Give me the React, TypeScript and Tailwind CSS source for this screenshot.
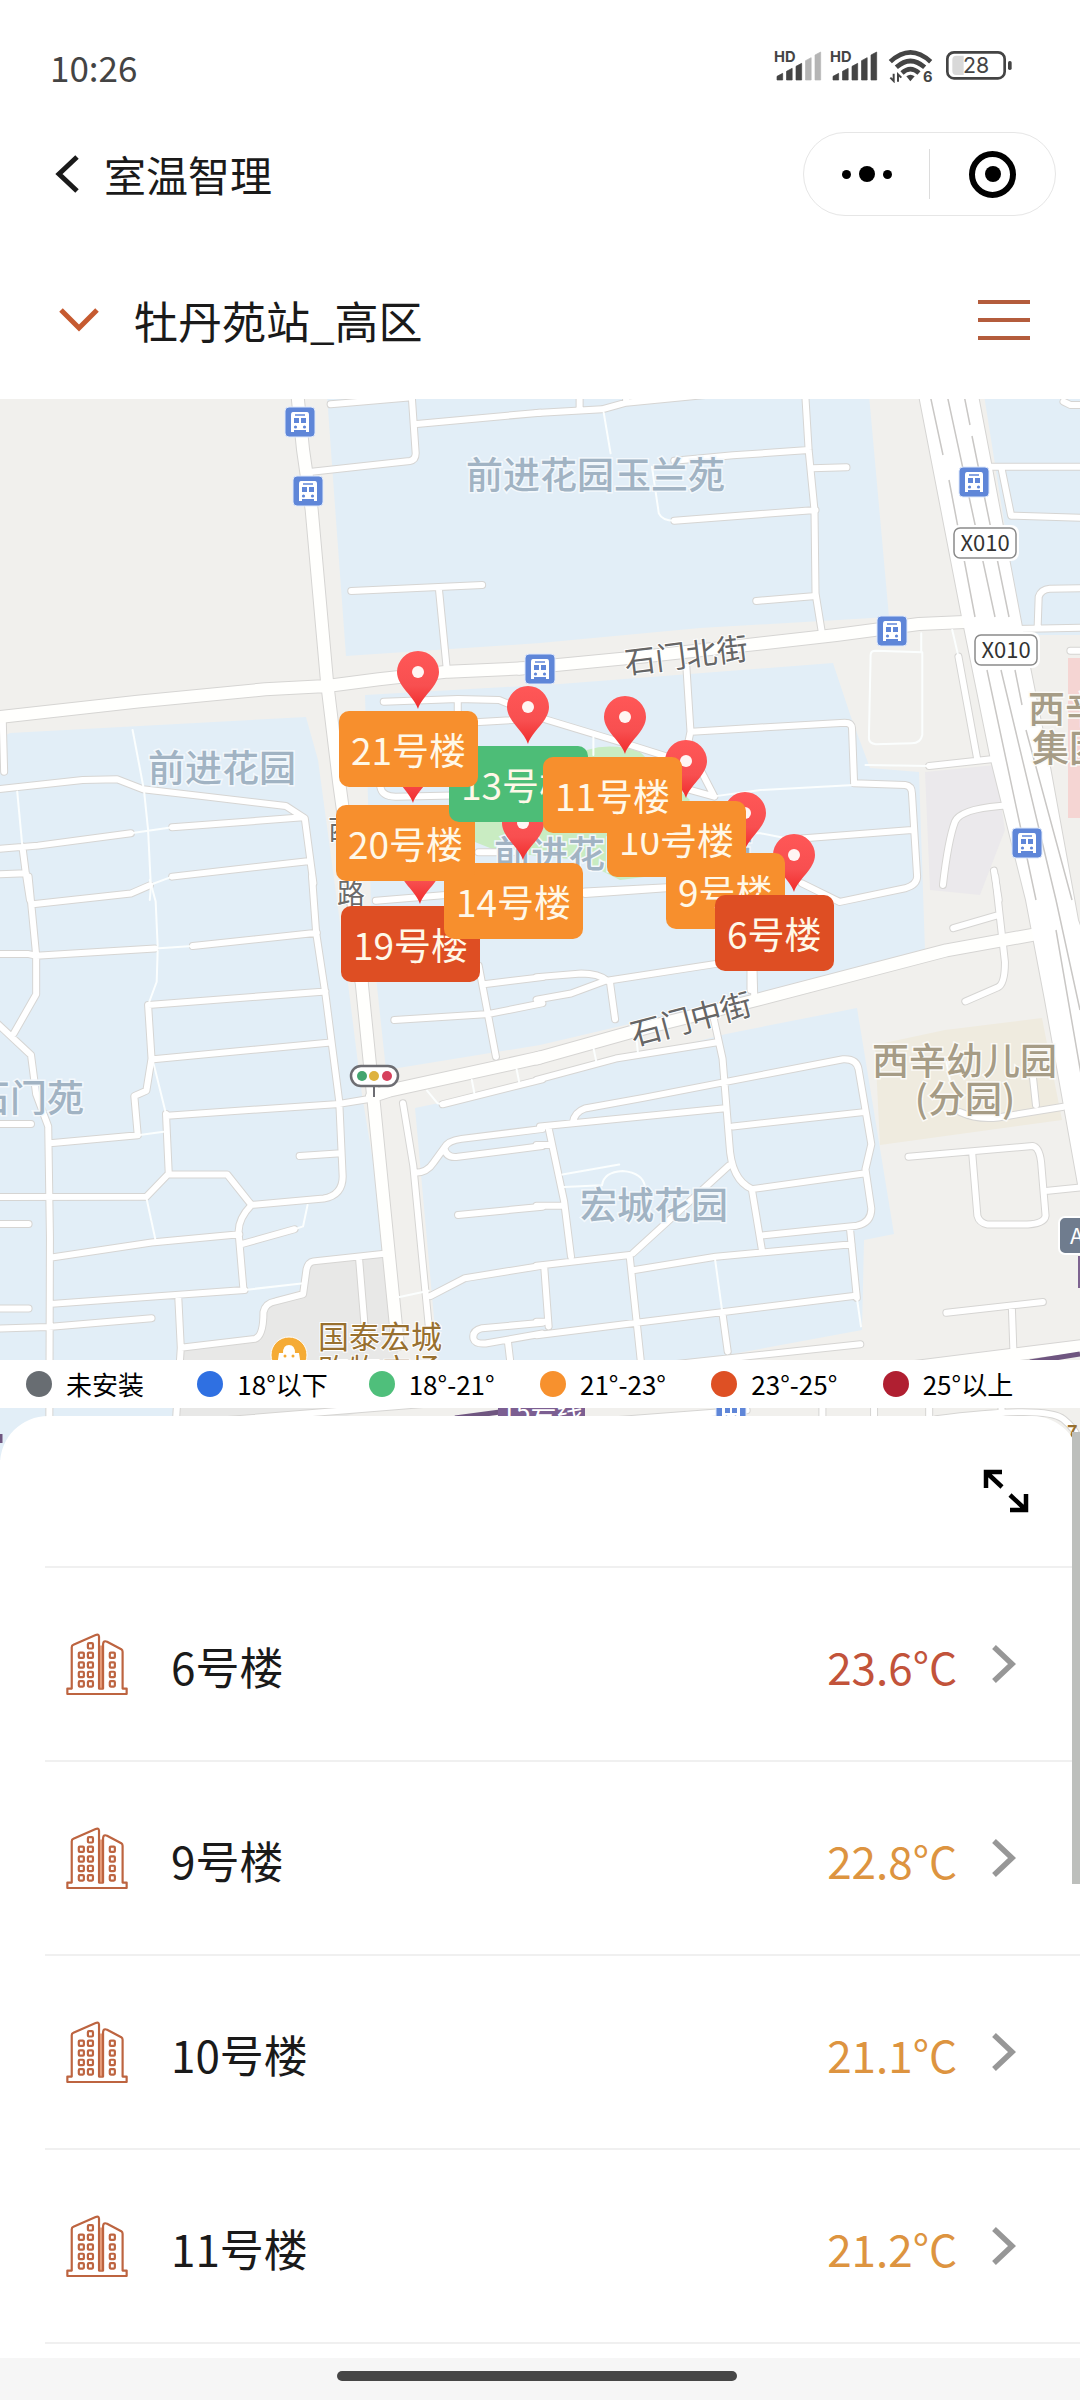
import React from "react";

const CJK = "font-['Noto_Sans_CJK_SC','Noto_Sans',sans-serif]";

/* ---------- Map data ---------- */

type Tile = { at: string; major?: string; minor: string; thin?: string };

const TILES: Tile[] = [
  {
    at: "translate(0 400) scale(.3444 .3333)",
    major:
      "M864 -12L880 150L905 330L950 850L985 1150L1005 1300L1050 1746 M-10 952L400 905L770 868L950 858L1100 838L1300 815L1520 805",
    minor:
      "M8 960L12 1115 M-10 1168L240 1140L340 1138L415 1168L600 1190L830 1218L885 1255L910 1450 M-10 1347L110 1337L380 1300 M500 1282L880 1252 M65 1340L75 1420L87 1500 M-10 1423L75 1420 M500 1430L900 1383 M960 13L1195 -8 M1195 -20L1207 160Q1207 180 1190 183L905 215 M1210 72L1568 38 M1020 573L1400 555 M1275 573L1297 805",
    thin: "M50 1175L65 1340 M380 1300L500 1282 M385 990L418 1170L430 1290L438 1460L435 1500 M435 1455L500 1430",
  },
  {
    at: "translate(540 400) scale(.3444 .3333)",
    major: "M-60 806L300 770L560 740L860 705L1100 672L1250 665",
    minor:
      "M-10 39L180 28L250 8L480 -15 M115 -10V30 M250 -15V8 M770 -20L780 150L797 330L800 580L818 695 M780 150L560 166L390 182 M790 205L890 202 M800 330L390 362 M628 603L800 588 M425 800L437 995L430 1030 M440 995L885 968Q905 968 906 985L912 1150L1060 1155Q1080 1158 1080 1180L1095 1430Q1095 1455 1060 1465L870 1506L760 1450 M730 1318L1080 1290 M130 1475L370 1462 M1215 770L1270 1080 M1130 1098L1310 1078 M1400 1213L1335 1218Q1220 1228 1205 1265Q1185 1320 1170 1455 M1318 1412L1332 1500 M1310 200H1600 M1340 205L1368 347L1600 354 M1445 680L1448 590Q1455 568 1480 566L1600 564 M1250 690L1600 683 M1540 752H1600 M1520 5L1540 15H1600",
    thin: "M185 38L205 160 M325 200L345 340Q355 362 390 362 M912 1155L640 1170L500 1190 M590 1300L640 1300L730 1318 M1197 690L1215 770 M945 1095L1130 1098 M1107 700V755 M975 752L1110 757V1005Q1105 1030 1080 1030L975 1033Q955 1030 955 1015L960 765Q960 752 975 752Z M155 1010V1065",
  },
  {
    at: "translate(320 620) scale(.3444 .3333)",
    minor:
      "M185 245L400 237L520 240L660 300L900 375L1100 440L1145 530L1040 500 M400 240V310 M400 310L560 300 M175 500Q180 530 220 530L420 526 M162 842L400 822 M770 822L1005 805 M460 697H560 M1250 1000V1110",
  },
  {
    at: "translate(0 880) scale(.3444 .3571)",
    major: "M1050 285L1085 620L1155 1300 M1080 606L1130 590L1568 497",
    minor:
      "M83 -10L105 210V320L40 430 M-10 400L90 490L105 600L140 690L145 1000L143 1600 M95 68L380 38L435 15 M-10 207L80 207L105 212L450 192 M560 185L920 148 M906 -10L918 148L945 320L985 620L995 830Q995 882 940 892L730 910L660 825H490 M430 350L945 312 M430 350L440 500L425 590L390 605L400 715L145 737 M445 502L960 455 M482 655L490 822L425 887L-10 888 M485 660L985 627L1080 612 M870 773L990 765 M730 910Q690 950 693 990L707 1148 M150 1057L440 1015L695 992 M700 1020L855 978 M150 1187L710 1148 M-10 963H83 M-10 1200H83 M-10 1256L140 1252L440 1227 M-10 683H90 M518 1175L525 1310L505 1600 M525 1310L740 1285Q765 1278 765 1210Q770 1185 800 1180L880 1160L890 1090Q895 1070 910 1068L1130 1045 M1043 1065L1063 1300 M1170 625L1200 800L1250 1300 M1205 820Q1240 820 1260 790L1290 750Q1300 730 1340 725L1575 697 M1290 750Q1295 780 1330 775L1575 745 M1330 938L1575 915 M1250 1165L1350 1115L1575 1080 M1575 1240L1400 1255Q1370 1262 1375 1285Q1380 1300 1410 1298L1575 1270 M1475 1295L1488 1400 M1145 392L1420 375L1575 345 M1405 292L1575 272 M1390 240L1440 495 M1285 628L1575 558 M560 1520L1300 1462",
    thin: "M435 0L452 60L458 190L455 285L430 350 M450 192L560 185 M400 715L475 705 M445 510L482 655 M425 890L452 1010 M855 978L880 970L893 910 M710 1148L875 1130 M1160 1168L1245 1150 M1240 590L1270 625L1290 628 M1370 560L1378 600 M1500 530L1508 568",
  },
  {
    at: "translate(540 880) scale(.3444 .3571)",
    major: "M-10 500L330 408L620 338L1180 197L1450 150 M1020 1372L1600 1302",
    minor:
      "M-10 272L120 262Q170 262 195 282 M195 282L510 235 M-10 335L90 318L190 282 M203 285L218 390 M620 250L622 325 M-10 560L220 500L510 455 M505 390L530 500L550 740Q555 840 615 865L645 1040 M95 680Q100 650 130 640L300 610L880 502Q920 500 925 530L962 740L945 810L962 920Q962 960 920 968L650 995 M0 690L530 640 M560 690L940 650 M620 865L940 822 M548 800L270 1045 M25 695L70 900L90 1055 M-10 1080L10 1078L260 1050L293 1350 M12 1080L25 1250 M275 1092L510 1055L905 1020 M900 975L920 1170 M-10 1275L280 1240L910 1165 M530 1215L545 1320 M370 1358L930 1300 M-10 742H30 M-10 912H70 M-10 1237H20 M1070 775L1430 745Q1450 748 1455 790L1468 940Q1465 965 1400 965H1300Q1275 960 1270 940L1255 765 M1475 870L1600 858 M1180 1212L1460 1182 M1370 1195L1375 1330 M1322 -10L1350 230Q1350 290 1330 300L1235 340 M1325 100L1200 135 M1220 650Q1270 672 1330 665L1520 635 M1430 540L1440 630 M-10 1530L600 1485 M820 1470V1520 M970 1470V1520 M1130 1470V1520 M1340 1460V1500 M1150 1510Q1470 1470 1520 1510T1560 1580",
    thin: "M920 1170L932 1250 M508 1060L530 1215 M65 825L230 797 M70 860L180 855Q185 818 240 815Q300 820 305 860 M1180 510L1190 560 M155 470L165 515 M280 445L285 490",
  },
];

const HIGHWAY =
  "M918 390L962 617L991 760L1026 900L1045 1000L1079 1190L1100 1190V980L1078 920L1050 767L1022 627L991 463L977 390Z";
const LANES =
  "M929 390L943 455 M949 480L975 617 M946 390L995 617 M963 390L970 425 M972 436L1009 617 M987 670L1036 900 M1001 670L1056 900L1080 1010 M1015 670L1022 705 M1026 730L1072 900 M1056 930L1082 1080";

const BLOCKS = [
  "327,395 869,395 889,617 700,628 540,643 346,656 336,520",
  "0,738 10,733 306,717 318,760 345,960 362,1095 388,1252 310,1262 300,1290 268,1305 255,1338 181,1351 172,1465 0,1465",
  "365,695 560,684 833,663 851,717 870,768 919,772 925,951 753,995 540,1045 386,1070 372,940",
  "415,1108 540,1082 726,1034 857,1008 894,1234 864,1240 862,1330 690,1362 438,1362",
  "984,395 1085,395 1085,635 1022,635",
];

const BUS_STOPS = [
  [300, 422],
  [308, 491],
  [540, 669],
  [892, 631],
  [974, 482],
  [1027, 843],
  [731, 1412],
];

const PINS = [
  [418, 709],
  [528, 744],
  [625, 754],
  [686, 798],
  [745, 850],
  [794, 892],
  [413, 803],
  [420, 904],
  [523, 860],
];

const MARKERS = [
  { name: "19号楼", spot: "left-[341px] top-[507px]", tone: "bg-[#de4e23]" },
  { name: "14号楼", spot: "left-[444px] top-[464px]", tone: "bg-[#f78f2d]" },
  { name: "20号楼", spot: "left-[336px] top-[406px]", tone: "bg-[#f78f2d]" },
  { name: "13号楼", spot: "left-[449px] top-[347px]", tone: "bg-[#4dbd77]" },
  { name: "21号楼", spot: "left-[339px] top-[312px]", tone: "bg-[#f78f2d]" },
  { name: "9号楼", spot: "left-[666px] top-[454px]", tone: "bg-[#f78f2d]" },
  { name: "10号楼", spot: "left-[607px] top-[402px]", tone: "bg-[#f78f2d]" },
  { name: "11号楼", spot: "left-[543px] top-[358px]", tone: "bg-[#f78f2d]" },
  { name: "6号楼", spot: "left-[715px] top-[496px]", tone: "bg-[#de4e23]" },
];

const LEGEND = [
  { label: "未安装", tone: "bg-[#686d72]" },
  { label: "18°以下", tone: "bg-[#2f70e2]" },
  { label: "18°-21°", tone: "bg-[#4fbf7b]" },
  { label: "21°-23°", tone: "bg-[#f7912e]" },
  { label: "23°-25°", tone: "bg-[#de5024]" },
  { label: "25°以上", tone: "bg-[#b01f31]" },
];

const BUILDINGS = [
  { name: "6号楼", temp: "23.6°C", tone: "text-[#c2533a]" },
  { name: "9号楼", temp: "22.8°C", tone: "text-[#dd9440]" },
  { name: "10号楼", temp: "21.1°C", tone: "text-[#dd9440]" },
  { name: "11号楼", temp: "21.2°C", tone: "text-[#dd9440]" },
];

/* ---------- Map drawing ---------- */

function Roads({ kind, width, color }: { kind: "major" | "minor" | "thin"; width: number; color: string }) {
  return (
    <g fill="none" stroke={color} strokeWidth={width} strokeLinecap="round" strokeLinejoin="round">
      {TILES.map((t) =>
        t[kind] ? <path key={t.at} transform={t.at} d={t[kind]} vectorEffect="non-scaling-stroke" /> : null,
      )}
    </g>
  );
}

function BusStop({ x, y }: { x: number; y: number }) {
  return (
    <g transform={`translate(${x - 15} ${y - 15})`}>
      <rect x="0" y="0" width="30" height="30" rx="4" fill="#5f86d8" stroke="#dfe9fb" strokeWidth="1" />
      <path d="M8 5H22Q24 5 24 8V25H21V23H9V25H6V8Q6 5 8 5Z" fill="#fff" />
      <path d="M10 8H20" stroke="#5f86d8" strokeWidth="1.5" />
      <rect x="9" y="11" width="5" height="5" fill="#5f86d8" />
      <rect x="16" y="11" width="5" height="5" fill="#5f86d8" />
      <circle cx="10.5" cy="20" r="1.6" fill="#5f86d8" />
      <circle cx="19.5" cy="20" r="1.6" fill="#5f86d8" />
    </g>
  );
}

function Pin({ x, y }: { x: number; y: number }) {
  return (
    <g transform={`translate(${x} ${y})`}>
      <path d="M0 0C-4 -13 -21 -23 -21 -37A21 21 0 0 1 21 -37C21 -23 4 -13 0 0Z" fill="url(#pin)" />
      <circle cx="0" cy="-37" r="6" fill="#fff5f3" />
    </g>
  );
}

function RoadShield({ x, y }: { x: number; y: number }) {
  return (
    <g>
      <rect x={x - 34} y={y - 18} width="68" height="36" rx="8" fill="#fff" />
      <rect x={x - 31} y={y - 15} width="62" height="30" rx="6" fill="#fff" stroke="#8a8a8a" strokeWidth="1.5" />
      <text x={x} y={y + 8} textAnchor="middle" fontSize="22" fill="#333">
        X010
      </text>
    </g>
  );
}

function MapDrawing() {
  return (
    <svg viewBox="0 399 1080 1061" className={`block h-[1061px] w-full ${CJK}`} preserveAspectRatio="xMinYMin slice" role="img" aria-label="地图">
      <defs>
        <linearGradient id="pin" x1="0" y1="0" x2="0" y2="1">
          <stop offset="0" stopColor="#ff5757" />
          <stop offset=".6" stopColor="#f84f50" />
          <stop offset="1" stopColor="#f02c2c" />
        </linearGradient>
      </defs>
      <rect x="0" y="399" width="1080" height="1061" fill="#f1f0ed" />
      {BLOCKS.map((b) => (
        <polygon key={b} points={b} fill="#e2eef7" />
      ))}
      <polygon points="310,1264 386,1257 404,1400 172,1465 181,1351 255,1340 268,1305 303,1292" fill="#e8e8e7" />
      <polygon points="925,772 995,765 1005,830 980,895 930,890" fill="#ebe9ec" />
      <polygon points="875,1045 945,1030 1042,1018 1062,1120 880,1145" fill="#efebdf" />
      <rect x="1068" y="658" width="12" height="160" fill="#f5d5d3" />
      <path d="M566 760Q600 738 640 752L690 800L650 840L700 870L620 880L580 860L500 852L470 840L480 800Z" fill="#c9ecc2" />

      <Roads kind="major" width={14} color="#d6d5d3" />
      <Roads kind="minor" width={8} color="#d6d5d3" />
      <path d={HIGHWAY} fill="#fff" stroke="#d6d5d3" strokeWidth="2" />
      <Roads kind="thin" width={2} color="#fbfefe" />
      <Roads kind="minor" width={6} color="#fff" />
      <Roads kind="major" width={12} color="#fffffd" />
      <path d={HIGHWAY} fill="#fff" />
      <path d={LANES} fill="none" stroke="#c9c7c5" strokeWidth="1.5" />

      <path d="M1030 1362L1080 1354 M455 1418L500 1412 M0 1443V1434" stroke="#6f5680" strokeWidth="5" />
      <rect x="1078" y="1256" width="4" height="32" fill="#7d6390" />
      <rect x="498" y="1394" width="87" height="32" rx="10" fill="#7c5f92" />
      <text x="542" y="1421" textAnchor="middle" fontSize="26" fill="#fff">
        15号线
      </text>

      <g fontSize="37" fontWeight="500" fill="#a1b3c3" stroke="#f3f8fc" strokeWidth="3" paintOrder="stroke">
        <text x="466" y="489">前进花园玉兰苑</text>
        <text x="148" y="782">前进花园</text>
        <text x="494" y="868">前进花园石门苑</text>
        <text x="-27" y="1112">石门苑</text>
        <text x="580" y="1219">宏城花园</text>
      </g>
      <g fontSize="37" fontWeight="500" fill="#a69c86" stroke="#fbfaf7" strokeWidth="3" paintOrder="stroke">
        <text x="872" y="1075">西辛幼儿园</text>
        <text x="965" y="1113" textAnchor="middle">
          (分园)
        </text>
        <text x="1028" y="723">西辛</text>
        <text x="1032" y="762">集团</text>
      </g>
      <g fontSize="31" fill="#666" stroke="#fff" strokeWidth="2" paintOrder="stroke">
        <text transform="translate(626 674) rotate(-7)">石门北街</text>
        <text transform="translate(634 1046) rotate(-15)">石门中街</text>
      </g>
      <g fontSize="28" fill="#6b6b6b" stroke="#fff" strokeWidth="2" paintOrder="stroke">
        <text x="328" y="840">西</text>
        <text x="337" y="904">路</text>
      </g>
      <g fontSize="31" fill="#98702f" stroke="#fff" strokeWidth="2" paintOrder="stroke">
        <text x="318" y="1348">国泰宏城</text>
        <text x="318" y="1381">购物广场</text>
      </g>
      <circle cx="289" cy="1355" r="18" fill="#f5ab35" stroke="#fff" strokeWidth="1" />
      <path d="M279 1353H299L301 1366H277Z" fill="#fff" />
      <path d="M283 1353Q283 1345 289 1345T295 1353" fill="#fff" />
      <circle cx="285" cy="1356" r="1.5" fill="#f5ab35" />
      <circle cx="293" cy="1356" r="1.5" fill="#f5ab35" />

      <path d="M374 1086V1097" stroke="#6d6d72" strokeWidth="2" />
      <rect x="351" y="1066" width="47" height="20" rx="10" fill="#fff" stroke="#6d6d72" strokeWidth="2.5" />
      <circle cx="362" cy="1076" r="5" fill="#43a56f" />
      <circle cx="374" cy="1076" r="5" fill="#deb23f" />
      <circle cx="387" cy="1076" r="5" fill="#d6405c" />

      {BUS_STOPS.map(([x, y]) => (
        <BusStop key={`${x}-${y}`} x={x} y={y} />
      ))}
      <RoadShield x={985} y={543} />
      <RoadShield x={1006} y={650} />
      <rect x="1059" y="1217" width="50" height="37" rx="6" fill="#6f7c8e" stroke="#fff" strokeWidth="2" />
      <text x="1070" y="1244" fontSize="22" fill="#fff">
        A
      </text>
      <text x="1067" y="1438" fontSize="18" fontWeight="700" fill="#98702f">
        7
      </text>

      {PINS.map(([x, y]) => (
        <Pin key={`${x}-${y}`} x={x} y={y} />
      ))}
    </svg>
  );
}

/* ---------- Interface icons ---------- */

function StatusIcons() {
  const bar = (x: number, h: number, color: string) => (
    <path key={x} d={`M${x} 183V${183 - h + 9}L${x + 17} ${183 - h}V183Z`} fill={color} stroke={color} strokeWidth="2" strokeLinejoin="round" />
  );
  const heights = [20, 35, 50, 67, 84];
  return (
    <svg viewBox="100 90 720 102" className="h-[34px] w-[240px] font-['Inter',sans-serif]" role="img" aria-label="HD 信号, Wi-Fi 6, 电量 28%">
      <g fontSize="44" fontWeight="700" fill="#444">
        <text x="103" y="128">HD</text>
        <text x="271" y="128">HD</text>
        <text x="550" y="190">6</text>
      </g>
      {heights.map((h, i) => bar(112 + i * 28.5, h, i > 2 ? "#b5b5b5" : "#444"))}
      {heights.map((h, i) => bar(280 + i * 28.5, h, "#444"))}
      <g fill="none" stroke="#444" strokeWidth="14">
        <path d="M452 128Q512 72 573 128" />
        <path d="M470 145Q512 107 555 145" />
        <path d="M487 162Q512 139 538 162" />
      </g>
      <path d="M500 172Q512 162 525 172L512 187Z" fill="#444" />
      <path d="M462 164V186L452 176 M475 188V166L485 176" fill="none" stroke="#444" strokeWidth="6" />
      <rect x="623" y="100" width="172" height="78" rx="20" fill="none" stroke="#444" strokeWidth="8" />
      <path d="M650 110H672V168H650Q638 168 638 156V122Q638 110 650 110Z" fill="#d9d9d9" />
      <rect x="805" y="126" width="11" height="27" rx="5" fill="#444" />
      <text x="709" y="163" textAnchor="middle" fontSize="64" fill="#444">
        28
      </text>
    </svg>
  );
}

function BuildingIcon() {
  const windows = [
    [72, 41],
    [45, 69], [72, 69], [137, 69],
    [45, 98], [72, 98], [137, 98],
    [45, 126], [72, 126], [137, 126],
    [45, 154], [72, 154], [137, 154],
  ];
  return (
    <svg viewBox="0 0 184 190" className="size-[64px] shrink-0" fill="none" stroke="#bd6440" strokeWidth="6.5" strokeLinejoin="round" aria-hidden="true">
      <path d="M17 168V45Q17 40 22 38L88 9Q97 5 98 14V168H110V36Q111 24 122 29L164 51Q168 54 168 59V168H180V184H4V168Z" />
      <path d="M104 40V168" stroke="#e08a62" strokeWidth="5" />
      {windows.map(([x, y]) => (
        <rect key={`${x}-${y}`} x={x - 7} y={y - 8} width="15" height="16" rx="3" />
      ))}
    </svg>
  );
}

/* ---------- Page ---------- */

export default function App() {
  return (
    <div className={`flex min-h-screen flex-col bg-white text-[#1a1a1a] ${CJK}`}>
      <div className="flex h-[132px] items-center justify-between pr-[67px] pl-[50px]">
        <time className="text-[35px] leading-none text-[#444]">10:26</time>
        <StatusIcons />
      </div>

      <header className="flex h-[84px] items-center justify-between pr-6 pl-[54px]">
        <div className="flex items-center gap-6">
          <button type="button" aria-label="返回" className="cursor-pointer">
            <svg viewBox="0 0 26 42" className="h-[42px] w-[26px]" fill="none" stroke="#1a1a1a" strokeWidth="5">
              <path d="M23 4L5 21L23 38" />
            </svg>
          </button>
          <h1 className="text-[42px] leading-none">室温智理</h1>
        </div>
        <div className="flex h-[84px] w-[253px] items-center rounded-full border border-[#e6e6e6]">
          <button type="button" aria-label="更多" className="flex flex-1 cursor-pointer items-center justify-center gap-2">
            <span className="size-[9px] rounded-full bg-black" />
            <span className="size-4 rounded-full bg-black" />
            <span className="size-[9px] rounded-full bg-black" />
          </button>
          <span className="h-[50px] w-px bg-[#dcdcdc]" />
          <button type="button" aria-label="关闭" className="flex flex-1 cursor-pointer items-center justify-center">
            <span className="flex size-[47px] items-center justify-center rounded-full border-6 border-black">
              <span className="size-4 rounded-full bg-black" />
            </span>
          </button>
        </div>
      </header>

      <div className="flex h-[183px] items-center justify-between pt-6 pr-[50px] pl-[58px]">
        <button type="button" className="flex cursor-pointer items-center gap-[34px]">
          <svg viewBox="0 0 42 28" className="h-7 w-[42px]" fill="none" stroke="#c65a30" strokeWidth="5" aria-hidden="true">
            <path d="M3 4L21 22L39 4" />
          </svg>
          <span className="text-[44px] leading-none">牡丹苑站_高区</span>
        </button>
        <button type="button" aria-label="菜单" className="flex w-[52px] cursor-pointer flex-col gap-[14px]">
          <span className="h-1 bg-[#b45c3c]" />
          <span className="h-1 bg-[#b45c3c]" />
          <span className="h-1 bg-[#b45c3c]" />
        </button>
      </div>

      <section className="relative overflow-hidden">
        <MapDrawing />
        {MARKERS.map((m) => (
          <button
            key={m.name}
            type="button"
            className={`absolute flex h-[76px] cursor-pointer items-center rounded-[10px] px-3 text-[37px] leading-none text-[#fff8e8] ${m.spot} ${m.tone}`}
          >
            {m.name}
          </button>
        ))}
        <ul className="absolute inset-x-0 bottom-[52px] grid h-12 grid-cols-6 items-center bg-white px-[26px] text-[26px] leading-none text-black">
          {LEGEND.map((l) => (
            <li key={l.label} className="flex items-center gap-[14px] whitespace-nowrap">
              <span className={`size-[26px] rounded-full ${l.tone}`} />
              {l.label}
            </li>
          ))}
        </ul>
      </section>

      <main className="relative -mt-11 grow">
        <div className="h-full rounded-t-[48px] bg-white">
          <div className="flex h-[150px] items-center justify-end pr-[49px]">
            <button type="button" aria-label="展开" className="cursor-pointer">
              <svg viewBox="0 0 50 46" className="h-[46px] w-[50px]" fill="none" stroke="#000" strokeWidth="4.5">
                <path d="M5 20V4H21 M5 4L21 19 M45 26V42H29 M45 42L29 27" />
              </svg>
            </button>
          </div>
          <ul className="ml-[45px] border-y-2 border-[#f0f0f0]">
            {BUILDINGS.map((b, i) => (
              <li key={b.name} className={i > 0 ? "border-t-2 border-[#f0f0f0]" : ""}>
                <a href={`#building-${i}`} className="flex h-48 items-center pr-[63px] pl-5 text-[44px] leading-none">
                  <BuildingIcon />
                  <span className="ml-[42px] grow pt-1">{b.name}</span>
                  <span className={`pt-1 ${b.tone}`}>{b.temp}</span>
                  <svg viewBox="0 0 26 42" className="ml-[34px] h-[42px] w-[26px]" fill="none" stroke="#979797" strokeWidth="5.5" aria-hidden="true">
                    <path d="M3 4L21 21L3 38" />
                  </svg>
                </a>
              </li>
            ))}
          </ul>
        </div>
        <div className="absolute top-4 right-0 h-[452px] w-2 bg-[#bdbfbc]" />
      </main>

      <footer className="flex h-[42px] justify-center bg-[#f6f6f6] pt-[13px] pr-1.5">
        <div className="h-[10px] w-[400px] rounded-full bg-[#464646]" />
      </footer>
    </div>
  );
}
